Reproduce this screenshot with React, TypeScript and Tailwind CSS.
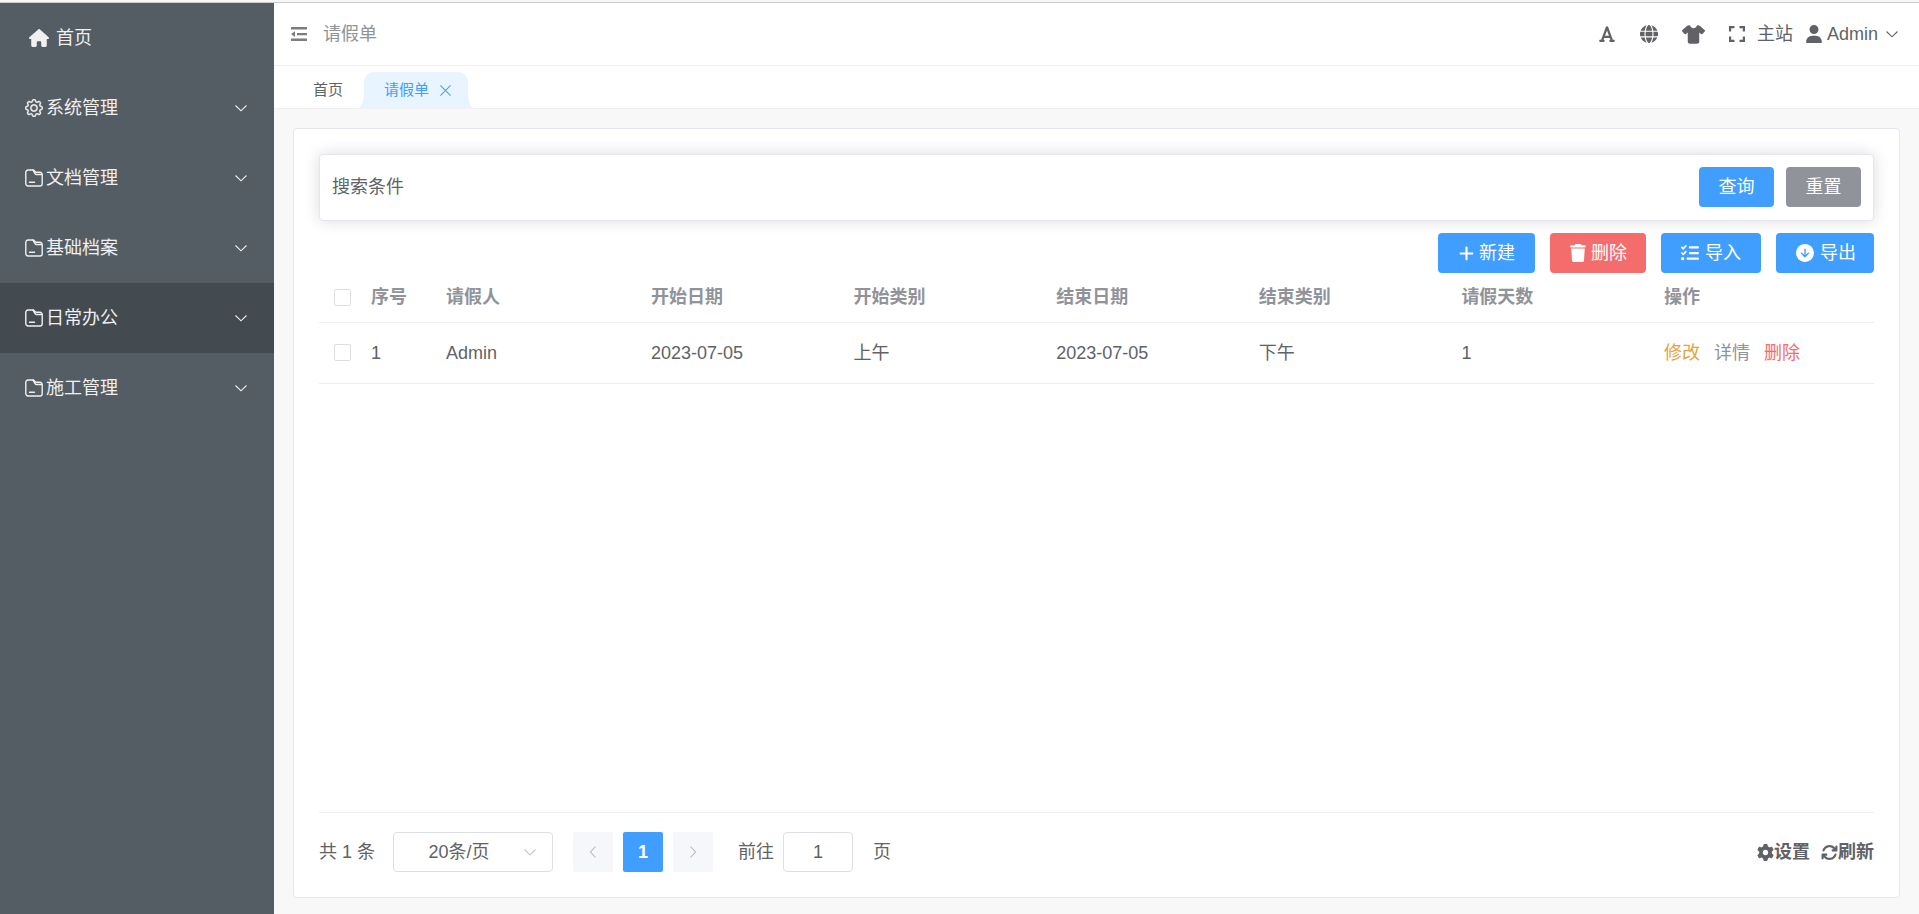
import React from "react";
import { FaArrowsRotate, FaFont, FaGear, FaGlobe, FaHouse, FaListCheck, FaPlus, FaShirt, FaTrash, FaUser } from "react-icons/fa6";
import { IoArrowDownCircle } from "react-icons/io5";
import { BsGear } from "react-icons/bs";

const menus = [
  { name: "系统管理", icon: "gear" },
  { name: "文档管理", icon: "folder" },
  { name: "基础档案", icon: "folder" },
  { name: "日常办公", icon: "folder", active: true },
  { name: "施工管理", icon: "folder" },
];

const columns = ["请假人", "开始日期", "开始类别", "结束日期", "结束类别", "请假天数"];

const rows = [
  { id: 1, values: ["Admin", "2023-07-05", "上午", "2023-07-05", "下午", "1"] },
];

type ArrowProps = { d: string; size?: number; className?: string };

const Arrow = ({ d, size = 14, className }: ArrowProps) => (
  <svg width={size} height={size} viewBox="0 0 14 14" fill="none" stroke="currentColor" strokeWidth="1.1" className={className} aria-hidden="true">
    <path d={d} />
  </svg>
);

const DOWN = "M1.5 4.5 L7 9.8 L12.5 4.5";
const LEFT = "M9.5 1.5 L4.5 7 L9.5 12.5";
const RIGHT = "M4.5 1.5 L9.5 7 L4.5 12.5";

const FolderIcon = () => (
  <svg width="18" height="18" viewBox="0 0 18 18" fill="none" stroke="currentColor" strokeWidth="1.4" strokeLinejoin="round" strokeLinecap="round" aria-hidden="true">
    <path d="M3 1h5.500l2.300 2.300h4.200a2.200 2.200 0 0 1 2.200 2.200V14.800a2.200 2.200 0 0 1-2.200 2.200H3a2.200 2.200 0 0 1-2.200-2.200V3.200A2.200 2.200 0 0 1 3 1z" />
    <path d="M8 1.200l2.200 3.600a1.500 1.500 0 0 0 1.300.700H16.500" />
    <path d="M4.500 13.200h5" />
  </svg>
);

const FoldIcon = () => (
  <svg width="16" height="16" viewBox="0 0 16 16" fill="currentColor" aria-hidden="true">
    <path d="M0 1h16v2.400H0zM6 6.900h10v2.400H6zM0 12.600h16V15H0zM0 8.100l4-2.800v5.600z" />
  </svg>
);

const FullscreenIcon = () => (
  <svg width="16" height="16" viewBox="0 0 16 16" fill="none" stroke="currentColor" strokeWidth="2.200" aria-hidden="true">
    <path d="M1.100 5.500V1.100h4.400M10.500 1.100h4.400v4.400M14.900 10.500v4.400h-4.400M5.500 14.900H1.100v-4.400" />
  </svg>
);

const Sidebar = () => (
  <nav className="w-[274px] shrink-0 bg-[#545c64] text-[#f0f0f0]">
    <a href="#" className="flex h-[70px] items-center gap-[7px] pl-[29px]">
      <FaHouse size={20} />
      首页
    </a>
    {menus.map((menu) => (
      <button
        key={menu.name}
        type="button"
        className={`flex h-[70px] w-full items-center gap-[3px] pr-[26px] pl-[25px] ${menu.active ? "bg-[#434a50]" : ""}`}
      >
        {menu.icon === "gear" ? <BsGear size={18} strokeWidth={0.4} /> : <FolderIcon />}
        {menu.name}
        <Arrow d={DOWN} className="ml-auto" />
      </button>
    ))}
  </nav>
);

const Header = () => (
  <header className="flex h-[63px] items-center border-b border-[#f0f0f0] bg-white pr-5 pl-[17px]">
    <button type="button" aria-label="折叠菜单" className="mr-4 text-[#7d7d80]">
      <FoldIcon />
    </button>
    <span className="text-[#909399]">请假单</span>
    <div className="ml-auto flex items-center">
      <button type="button" aria-label="字号" className="mr-6"><FaFont size={18} /></button>
      <button type="button" aria-label="语言" className="mr-6"><FaGlobe size={18} /></button>
      <button type="button" aria-label="主题" className="mr-6"><FaShirt size={23} /></button>
      <button type="button" aria-label="全屏" className="mr-3"><FullscreenIcon /></button>
      <a href="#" className="mr-3">主站</a>
      <button type="button" className="flex items-center">
        <FaUser size={18} className="mr-1" />
        Admin
        <Arrow d={DOWN} className="ml-[7px]" />
      </button>
    </div>
  </header>
);

const Tabs = () => (
  <div className="flex h-[43px] items-end border-b border-[#f0f0f0] bg-white pl-[39px] text-[15px] leading-9">
    <a href="#" className="w-[51px]">首页</a>
    <div className="relative flex h-9 items-center rounded-t-[10px] bg-[#e8f4ff] pr-4 pl-5 text-[#409eff]">
      <svg width="6" height="14" viewBox="0 0 6 14" className="absolute bottom-0 -left-[5px] text-[#e8f4ff]" fill="currentColor" aria-hidden="true">
        <path d="M0 14C3 11 5 6 5 0H6V14z" />
      </svg>
      <a href="#">请假单</a>
      <button type="button" aria-label="关闭" className="ml-[10px]">
        <Arrow d="M1.500 1.500 L12.500 12.500 M12.500 1.500 L1.500 12.500" size={13} />
      </button>
      <svg width="6" height="14" viewBox="0 0 6 14" className="absolute -right-[5px] bottom-0 text-[#e8f4ff]" fill="currentColor" aria-hidden="true">
        <path d="M6 14C3 11 1 6 1 0H0V14z" />
      </svg>
    </div>
  </div>
);

const Checkbox = ({ label }: { label: string }) => (
  <input
    type="checkbox"
    aria-label={label}
    className="block size-[17px] appearance-none rounded-[2px] border border-[#dcdfe6] bg-white checked:bg-[#409eff]"
  />
);

const LeaveTable = () => (
  <table className="w-full table-fixed text-left">
    <colgroup>
      <col className="w-[37px]" />
      <col className="w-[75px]" />
      <col className="w-[205px]" />
      <col span={5} />
      <col className="w-[225px]" />
    </colgroup>
    <thead className="text-[#909399]">
      <tr className="h-[49px] border-b border-[#ebeef5]">
        <th className="pl-[15px]"><Checkbox label="全选" /></th>
        <th className="pl-[15px]">序号</th>
        {columns.map((column) => (
          <th key={column} className="pl-[15px]">{column}</th>
        ))}
        <th className="pl-[15px]">操作</th>
      </tr>
    </thead>
    <tbody>
      {rows.map((row) => (
        <tr key={row.id} className="h-[61px] border-b border-[#ebeef5]">
          <td className="pl-[15px]"><Checkbox label={`选择第${row.id}行`} /></td>
          <td className="pl-[15px]">{row.id}</td>
          {row.values.map((value, i) => (
            <td key={i} className="pl-[15px]">{value}</td>
          ))}
          <td className="pl-[15px]">
            <div className="flex gap-[14px]">
              <a href="#" className="text-[#e6a23c]">修改</a>
              <a href="#" className="text-[#909399]">详情</a>
              <a href="#" className="text-[#f56c6c]">删除</a>
            </div>
          </td>
        </tr>
      ))}
    </tbody>
  </table>
);

const Pagination = () => (
  <div className="flex h-[60px] items-end border-t border-[#ebeef5]">
    <div className="flex w-full items-center">
      <span className="w-[74px]">共 1 条</span>
      <div className="relative mr-5">
        <select
          aria-label="每页条数"
          className="block h-10 w-[160px] appearance-none rounded border border-[#dcdfe6] bg-white pr-7 [text-align-last:center]"
        >
          <option>20条/页</option>
        </select>
        <Arrow d={DOWN} className="pointer-events-none absolute top-[13px] right-4 text-[#c0c4cc]" />
      </div>
      <div className="flex gap-[10px]">
        <button type="button" aria-label="上一页" className="flex size-10 items-center justify-center rounded-[2px] bg-[#f5f7fa] text-[#b4b8c0]">
          <Arrow d={LEFT} />
        </button>
        <button type="button" className="size-10 rounded-[2px] bg-[#409eff] font-bold text-white">1</button>
        <button type="button" aria-label="下一页" className="flex size-10 items-center justify-center rounded-[2px] bg-[#f5f7fa] text-[#b4b8c0]">
          <Arrow d={RIGHT} />
        </button>
      </div>
      <label className="ml-[25px] flex items-center">
        前往
        <input type="text" defaultValue="1" className="mr-5 ml-[9px] h-10 w-[70px] rounded border border-[#dcdfe6] text-center" />
        页
      </label>
      <div className="ml-auto flex gap-[11px] font-bold">
        <button type="button" className="flex items-center"><FaGear size={17} />设置</button>
        <button type="button" className="flex items-center"><FaArrowsRotate size={17} />刷新</button>
      </div>
    </div>
  </div>
);

const App = () => {
  return (
    <div className="flex h-screen flex-col bg-white font-['Liberation_Sans','Noto_Sans_CJK_SC',sans-serif] text-[18px] leading-6 text-[#606266]">
      <div className="h-[3px] shrink-0 border-b border-[#cccccc] bg-[#f7f7f7]" />
      <div className="flex min-h-0 flex-1">
        <Sidebar />
        <div className="flex min-w-0 flex-1 flex-col bg-[#f8f8f8]">
          <Header />
          <Tabs />
          <main className="flex flex-1 flex-col px-[19px] pt-[19px] pb-4">
            <section className="flex flex-1 flex-col rounded border border-[#e4e7ed] bg-white p-[25px]">
              <div className="flex shrink-0 items-center rounded border border-[#e4e7ed] bg-white px-3 pt-3 pb-[13px] shadow-[0_0_16px_rgba(0,0,0,0.14)]">
                <span>搜索条件</span>
                <div className="ml-auto flex gap-3 text-white">
                  <button type="button" className="h-10 w-[75px] rounded bg-[#409eff]">查询</button>
                  <button type="button" className="h-10 w-[75px] rounded bg-[#909399]">重置</button>
                </div>
              </div>
              <div className="mt-3 flex justify-end gap-[15px] text-white">
                <button type="button" className="flex h-10 items-center gap-1 rounded bg-[#409eff] px-5"><FaPlus size={17} />新建</button>
                <button type="button" className="flex h-10 items-center gap-1 rounded bg-[#f56c6c] px-[19px]"><FaTrash size={18} />删除</button>
                <button type="button" className="flex h-10 items-center gap-[6px] rounded bg-[#409eff] px-5"><FaListCheck size={18} />导入</button>
                <button type="button" className="flex h-10 items-center gap-1 rounded bg-[#409eff] px-[18px]"><IoArrowDownCircle size={22} />导出</button>
              </div>
              <LeaveTable />
              <div className="flex-1" />
              <Pagination />
            </section>
          </main>
        </div>
      </div>
    </div>
  );
};

export default App;
